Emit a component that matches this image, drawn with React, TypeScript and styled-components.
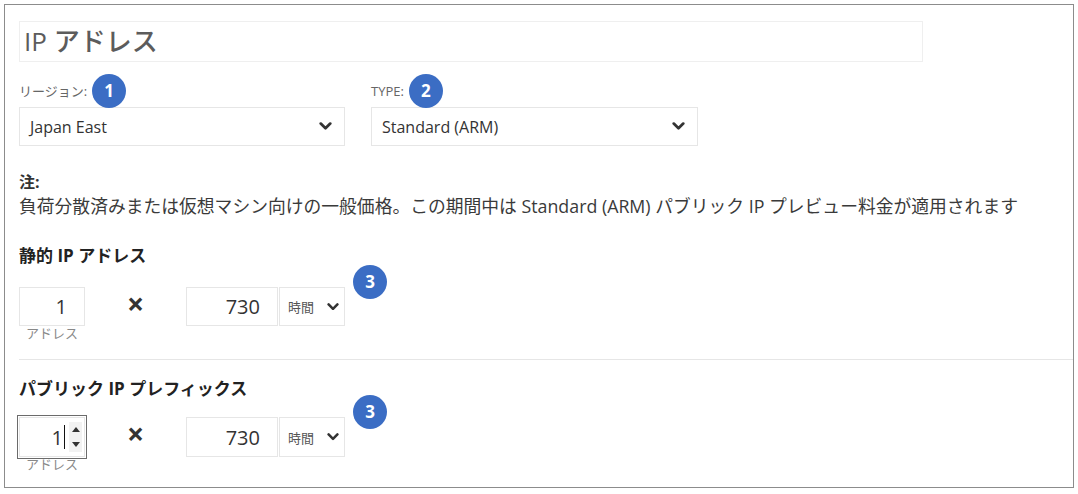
import styled, { createGlobalStyle } from 'styled-components';

const GlobalStyle = createGlobalStyle`
  body {
    margin: 0;
    background: #fff;
    font-family: "Open Sans", "Noto Sans CJK JP", sans-serif;
    color: #333;
  }
`;

const Frame = styled.section`
  box-sizing: border-box;
  width: 1070px;
  height: 484px;
  margin: 4px;
  padding: 16px 0 0 14px;
  border: 1px solid #8c8c8c;
`;

const TitleBox = styled.div`
  box-sizing: border-box;
  width: 904px;
  height: 41px;
  padding-left: 4px;
  border: 1px solid #efefef;
  font-size: 26px;
  font-weight: 500;
  line-height: 39px;
  color: #5c5c5c;
`;

const SelectRow = styled.div`
  display: flex;
  gap: 26px;
  margin-top: 21px;
`;

const Field = styled.div<{ $width: number }>`
  display: flex;
  flex-direction: column;
  width: ${(p) => p.$width}px;
`;

const FieldLabel = styled.span`
  position: relative;
  align-self: flex-start;
  height: 16px;
  margin-bottom: 8px;
  font-size: 13px;
  line-height: 16px;
  color: #666;
`;

const Badge = styled.span<{ $left?: string; $top?: string }>`
  position: absolute;
  left: ${(p) => p.$left ?? 'calc(100% + 5px)'};
  top: ${(p) => p.$top ?? '-9px'};
  width: 34px;
  height: 34px;
  border-radius: 50%;
  background: #3b6dc4;
  color: #fff;
  font-family: "Open Sans", sans-serif;
  font-size: 17px;
  font-weight: 700;
  line-height: 34px;
  text-align: center;
`;

const Select = styled.div`
  box-sizing: border-box;
  display: flex;
  align-items: center;
  justify-content: space-between;
  height: 39px;
  padding: 0 12px 0 10px;
  border: 1px solid #e6e6e6;
  font-size: 16px;
  color: #333;
`;

const NoteTitle = styled.div`
  margin-top: 25px;
  font-size: 16px;
  font-weight: 700;
  line-height: 22px;
  color: #333;
`;

const NoteText = styled.div`
  font-size: 17.8px;
  line-height: 26px;
  color: #3a3a3a;
  white-space: nowrap;
`;

const Heading = styled.h3<{ $top: number }>`
  margin: ${(p) => p.$top}px 0 0;
  font-size: 17px;
  font-weight: 700;
  line-height: 24px;
  color: #222;
`;

const CalcRow = styled.div<{ $top: number }>`
  position: relative;
  display: flex;
  align-items: flex-start;
  width: 326px;
  margin-top: ${(p) => p.$top}px;
`;

const QtyCol = styled.div`
  display: flex;
  flex-direction: column;
  align-items: center;
  width: 66px;
`;

const NumBox = styled.div<{ $width: number; $height: number; $focused?: boolean }>`
  box-sizing: border-box;
  position: relative;
  display: flex;
  align-items: center;
  justify-content: flex-end;
  width: ${(p) => p.$width}px;
  height: ${(p) => p.$height}px;
  padding-right: ${(p) => (p.$focused ? 19 : 17)}px;
  border: 1px solid #e6e6e6;
  font-size: 20px;
  color: #333;
  outline: ${(p) => (p.$focused ? '1.5px solid #6b6b6b' : 'none')};
  outline-offset: 1px;
`;

const Caret = styled.span`
  display: inline-block;
  width: 1px;
  height: 24px;
  margin-left: 1px;
  background: #111;
`;

const Spinner = styled.span`
  position: absolute;
  right: 2px;
  top: 4px;
  bottom: 4px;
  width: 13px;
  display: flex;
  flex-direction: column;
  align-items: center;
  justify-content: space-around;
  background: #f2f2f2;

  &::before,
  &::after {
    content: '';
    border-left: 4px solid transparent;
    border-right: 4px solid transparent;
  }
  &::before {
    border-bottom: 5px solid #333;
  }
  &::after {
    border-top: 5px solid #333;
  }
`;

const SubLabel = styled.span`
  font-size: 13px;
  line-height: 15px;
  color: #888;
`;

const Times = styled.span<{ $height: number }>`
  width: 101px;
  font-size: 30px;
  font-weight: 700;
  line-height: ${(p) => p.$height - 6}px;
  text-align: center;
  color: #333;
`;

const UnitSelect = styled.div<{ $height: number }>`
  box-sizing: border-box;
  display: flex;
  align-items: center;
  justify-content: space-between;
  width: 66px;
  height: ${(p) => p.$height}px;
  margin-left: 1px;
  padding: 0 5px 0 8px;
  border: 1px solid #e6e6e6;
  font-size: 13px;
  color: #555;
`;

const Divider = styled.hr`
  height: 1px;
  margin: 18px 0 0;
  border: 0;
  background: #e6e6e6;
`;

const Chevron = ({ size = 13 }: { size?: number }) => (
  <svg width={size} height={size * 0.65} viewBox="0 0 12 8" fill="none">
    <polyline points="1.5,1.5 6,6 10.5,1.5" stroke="#333" strokeWidth="2.6" strokeLinecap="round" strokeLinejoin="round" />
  </svg>
);

type CalcProps = { top: number; height: number; focused?: boolean };

const CalcLine = ({ top, height, focused }: CalcProps) => (
  <CalcRow $top={top}>
    <QtyCol>
      <NumBox $width={66} $height={height} $focused={focused}>
        1
        {focused && <Caret />}
        {focused && <Spinner />}
      </NumBox>
      <SubLabel>アドレス</SubLabel>
    </QtyCol>
    <Times $height={height}>×</Times>
    <NumBox $width={92} $height={height}>730</NumBox>
    <UnitSelect $height={height}>
      時間
      <Chevron size={12} />
    </UnitSelect>
    <Badge $left="calc(100% + 8px)" $top="-22px">3</Badge>
  </CalcRow>
);

const App = () => {
  return (
    <>
      <GlobalStyle />
      <Frame>
        <TitleBox>IP アドレス</TitleBox>
        <SelectRow>
          <Field $width={326}>
            <FieldLabel>
              リージョン:
              <Badge>1</Badge>
            </FieldLabel>
            <Select>
              Japan East
              <Chevron />
            </Select>
          </Field>
          <Field $width={327}>
            <FieldLabel>
              TYPE:
              <Badge>2</Badge>
            </FieldLabel>
            <Select>
              Standard (ARM)
              <Chevron />
            </Select>
          </Field>
        </SelectRow>
        <NoteTitle>注:</NoteTitle>
        <NoteText>
          負荷分散済みまたは仮想マシン向けの一般価格。この期間中は Standard (ARM) パブリック IP プレビュー料金が適用されます
        </NoteText>
        <Heading $top={25}>静的 IP アドレス</Heading>
        <CalcLine top={19} height={39} />
        <Divider />
        <Heading $top={17}>パブリック IP プレフィックス</Heading>
        <CalcLine top={16} height={40} focused />
      </Frame>
    </>
  );
};

export default App;
